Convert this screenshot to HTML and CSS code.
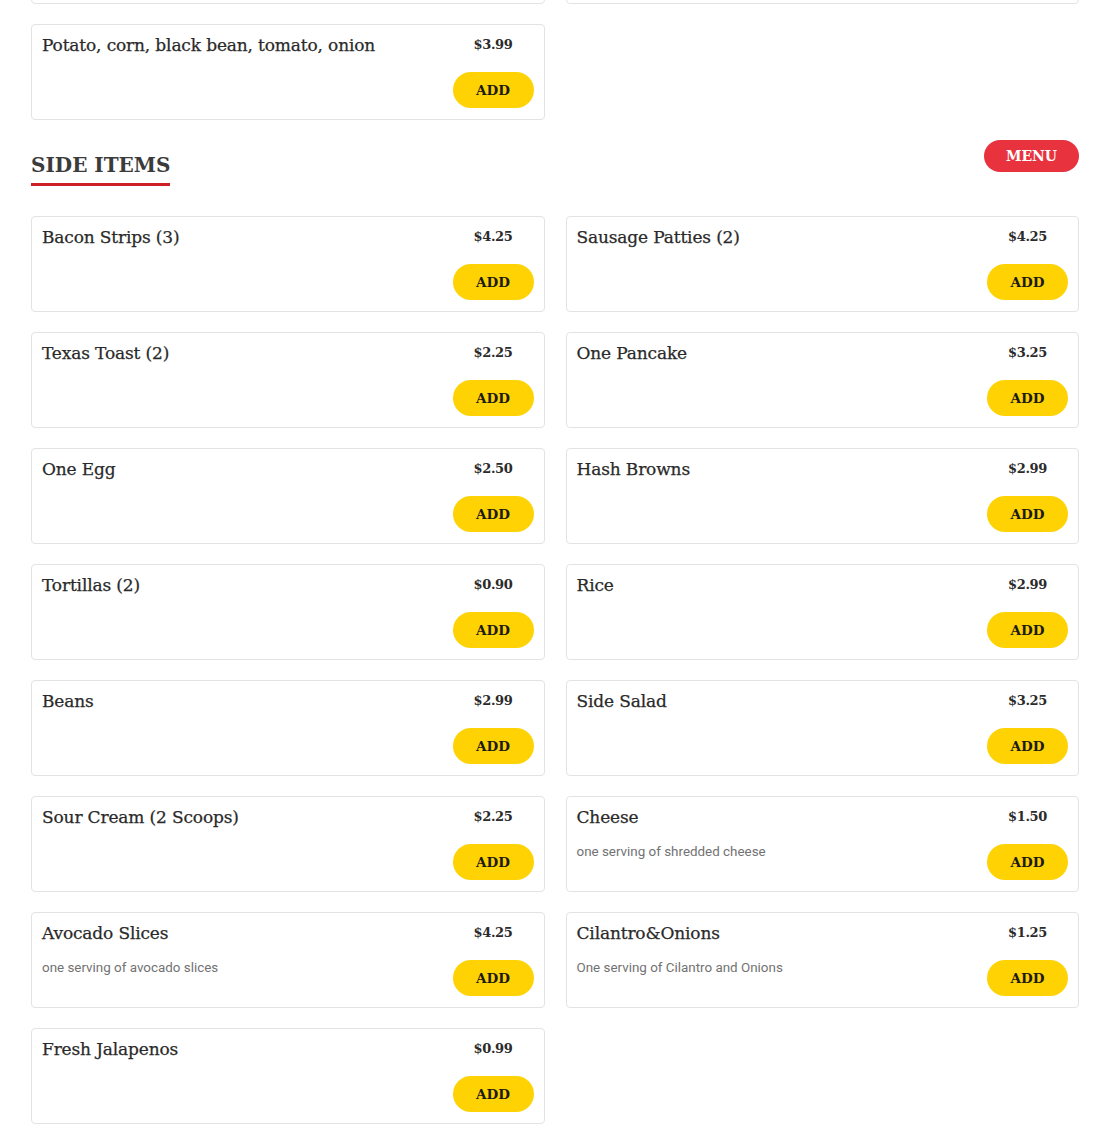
FILE: index.html
```html
<!DOCTYPE html>
<html lang="en">
<head>
<meta charset="utf-8">
<title>Menu - Side Items</title>
<link rel="stylesheet" href="styles.css">
</head>
<body>
<div class="page">
  <section class="section">
    <div class="grid">
      <div class="card card-clipped"></div>
      <div class="card card-clipped"></div>
      <div class="card">
        <div class="card-info"><div class="card-title">Potato, corn, black bean, tomato, onion</div></div>
        <div class="card-action"><div class="price">$3.99</div><button class="add-btn">ADD</button></div>
      </div>
    </div>
  </section>

  <section class="section">
    <div class="section-head">
      <h2 class="section-title">SIDE ITEMS</h2>
      <a class="menu-btn" href="#">MENU</a>
    </div>
    <div class="grid">
      <div class="card">
        <div class="card-info"><div class="card-title">Bacon Strips (3)</div></div>
        <div class="card-action"><div class="price">$4.25</div><button class="add-btn">ADD</button></div>
      </div>
      <div class="card">
        <div class="card-info"><div class="card-title">Sausage Patties (2)</div></div>
        <div class="card-action"><div class="price">$4.25</div><button class="add-btn">ADD</button></div>
      </div>
      <div class="card">
        <div class="card-info"><div class="card-title">Texas Toast (2)</div></div>
        <div class="card-action"><div class="price">$2.25</div><button class="add-btn">ADD</button></div>
      </div>
      <div class="card">
        <div class="card-info"><div class="card-title">One Pancake</div></div>
        <div class="card-action"><div class="price">$3.25</div><button class="add-btn">ADD</button></div>
      </div>
      <div class="card">
        <div class="card-info"><div class="card-title">One Egg</div></div>
        <div class="card-action"><div class="price">$2.50</div><button class="add-btn">ADD</button></div>
      </div>
      <div class="card">
        <div class="card-info"><div class="card-title">Hash Browns</div></div>
        <div class="card-action"><div class="price">$2.99</div><button class="add-btn">ADD</button></div>
      </div>
      <div class="card">
        <div class="card-info"><div class="card-title">Tortillas (2)</div></div>
        <div class="card-action"><div class="price">$0.90</div><button class="add-btn">ADD</button></div>
      </div>
      <div class="card">
        <div class="card-info"><div class="card-title">Rice</div></div>
        <div class="card-action"><div class="price">$2.99</div><button class="add-btn">ADD</button></div>
      </div>
      <div class="card">
        <div class="card-info"><div class="card-title">Beans</div></div>
        <div class="card-action"><div class="price">$2.99</div><button class="add-btn">ADD</button></div>
      </div>
      <div class="card">
        <div class="card-info"><div class="card-title">Side Salad</div></div>
        <div class="card-action"><div class="price">$3.25</div><button class="add-btn">ADD</button></div>
      </div>
      <div class="card">
        <div class="card-info"><div class="card-title">Sour Cream (2 Scoops)</div></div>
        <div class="card-action"><div class="price">$2.25</div><button class="add-btn">ADD</button></div>
      </div>
      <div class="card">
        <div class="card-info"><div class="card-title">Cheese</div><div class="card-desc">one serving of shredded cheese</div></div>
        <div class="card-action"><div class="price">$1.50</div><button class="add-btn">ADD</button></div>
      </div>
      <div class="card">
        <div class="card-info"><div class="card-title">Avocado Slices</div><div class="card-desc">one serving of avocado slices</div></div>
        <div class="card-action"><div class="price">$4.25</div><button class="add-btn">ADD</button></div>
      </div>
      <div class="card">
        <div class="card-info"><div class="card-title">Cilantro&amp;Onions</div><div class="card-desc">One serving of Cilantro and Onions</div></div>
        <div class="card-action"><div class="price">$1.25</div><button class="add-btn">ADD</button></div>
      </div>
      <div class="card">
        <div class="card-info"><div class="card-title">Fresh Jalapenos</div></div>
        <div class="card-action"><div class="price">$0.99</div><button class="add-btn">ADD</button></div>
      </div>
    </div>
  </section>
</div>
</body>
</html>
```

FILE: styles.css
```css
* { box-sizing: border-box; }

html, body {
  margin: 0;
  padding: 0;
  background: #ffffff;
}

body {
  font-family: "DejaVu Serif", "Liberation Serif", serif;
  color: #2e2e2e;
}

.page {
  margin-top: -92px;
  padding: 0 31px;
}

.grid {
  display: grid;
  grid-template-columns: 1fr 1fr;
  column-gap: 21px;
  row-gap: 20px;
}

.card {
  display: flex;
  justify-content: space-between;
  height: 96px;
  padding: 10px 10px 11px;
  border: 1px solid #e3e3e3;
  border-radius: 4px;
  background: #fff;
}

.card-info {
  flex: 1;
  min-width: 0;
}

.card-title {
  font-size: 17px;
  line-height: 20px;
  letter-spacing: -0.15px;
  color: #2a2a2a;
  -webkit-text-stroke: 0.25px #2a2a2a;
}

.card-desc {
  margin-top: 16px;
  font-family: Roboto, "Noto Sans", sans-serif;
  font-size: 13.4px;
  line-height: 18px;
  color: #727272;
}

.card-action {
  width: 81px;
  display: flex;
  flex-direction: column;
  align-items: center;
  justify-content: space-between;
  flex-shrink: 0;
}

.price {
  font-weight: bold;
  font-size: 13px;
  line-height: 18px;
  padding-top: 1px;
  letter-spacing: -0.3px;
  color: #2b2b2b;
}

.add-btn {
  width: 81px;
  height: 36px;
  border: 0;
  border-radius: 18px;
  background: #ffd203;
  color: #1c1a12;
  font-family: "DejaVu Serif", "Liberation Serif", serif;
  font-weight: bold;
  font-size: 13.5px;
  padding: 0;
  cursor: pointer;
}

.section-head {
  display: flex;
  justify-content: space-between;
  align-items: flex-start;
  margin-top: 20px;
  margin-bottom: 30px;
}

.section-title {
  margin: 15px 0 0;
  font-size: 20px;
  line-height: 21px;
  font-weight: bold;
  color: #3b3b3b;
  padding-bottom: 7px;
  border-bottom: 3px solid #cf1f26;
}

.menu-btn {
  display: flex;
  align-items: center;
  justify-content: center;
  width: 95px;
  height: 32px;
  border-radius: 16px;
  background: #e8333f;
  color: #ffffff;
  font-weight: bold;
  font-size: 14px;
  text-decoration: none;
}
```
